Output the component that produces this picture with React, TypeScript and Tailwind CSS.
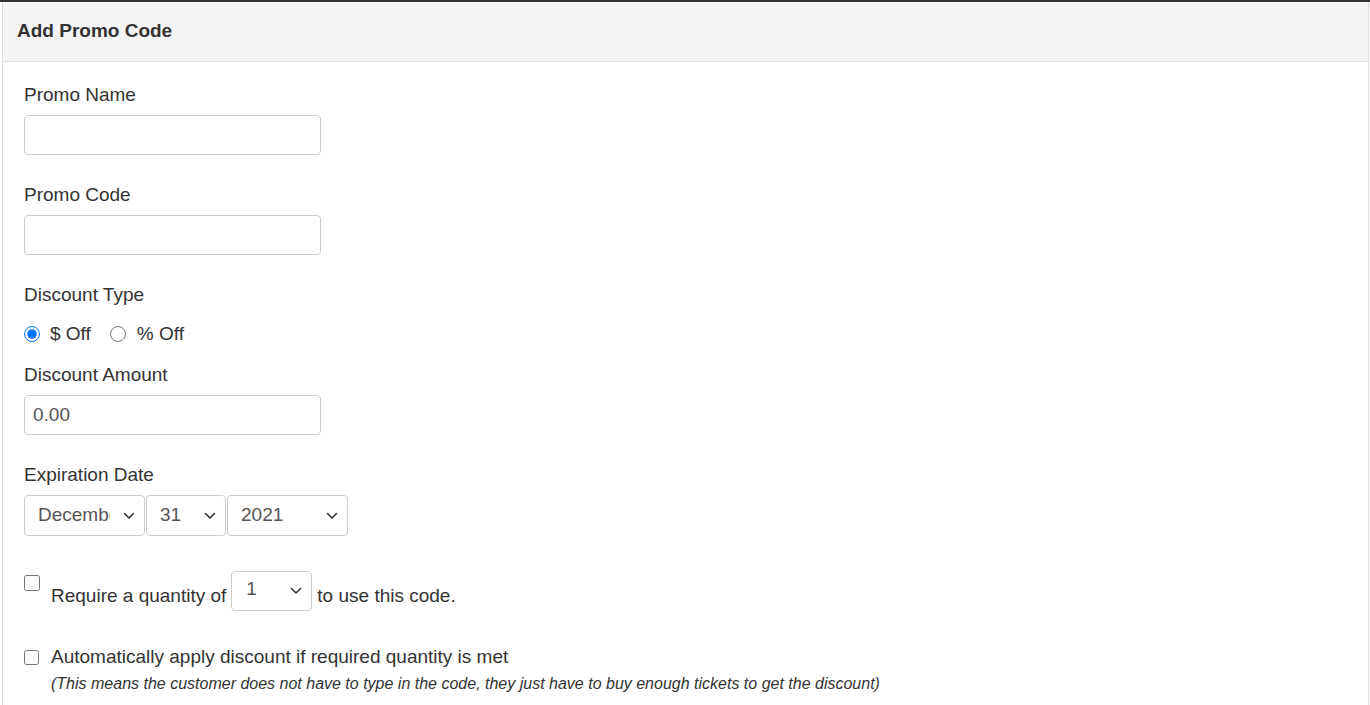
import React from 'react';

function Chevron() {
  return (
    <svg
      className="pointer-events-none absolute right-[10px] top-1/2 -translate-y-1/2"
      width="12"
      height="8"
      viewBox="0 0 12 8"
      fill="none"
    >
      <path d="M1.5 1.5 6 6l4.5-4.5" stroke="#333" strokeWidth="1.6" strokeLinecap="round" strokeLinejoin="round" />
    </svg>
  );
}

function Select({ value, options, width }: { value: string; options: string[]; width: string }) {
  return (
    <div className={`relative ${width}`}>
      <select
        defaultValue={value}
        className="h-[41px] w-full appearance-none rounded-[4px] border border-[#ccc] bg-white pl-[13px] pr-[34px] text-[19px] text-[#555] outline-none"
      >
        {options.map((o) => (
          <option key={o}>{o}</option>
        ))}
      </select>
      <Chevron />
    </div>
  );
}

const months = ['January', 'February', 'March', 'April', 'May', 'June', 'July', 'August', 'September', 'October', 'November', 'December'];
const days = Array.from({ length: 31 }, (_, i) => String(i + 1));
const years = ['2021', '2022', '2023', '2024'];

export default function App() {
  return (
    <div className="min-h-screen bg-white font-['Liberation_Sans',Arial,sans-serif] text-[#333]">
      <div className="border-t-[2px] border-[#333]">
        <div className="ml-[2px] mr-[1px] min-h-[703px] border-l border-r border-[#ddd]">
          {/* Panel heading */}
          <div className="flex h-[60px] items-center border-b border-[#ddd] bg-[#f5f5f5] px-[14px]">
            <h3 className="text-[19px] font-bold text-[#333]">Add Promo Code</h3>
          </div>

          {/* Panel body */}
          <div className="px-[21px] pt-[20px]">
            <label className="block text-[19px] leading-[26px]">Promo Name</label>
            <input className="mt-[7px] block h-[40px] w-[297px] rounded-[4px] border border-[#ccc] px-[8px] text-[19px] outline-none" />

            <label className="mt-[27px] block text-[19px] leading-[26px]">Promo Code</label>
            <input className="mt-[7px] block h-[40px] w-[297px] rounded-[4px] border border-[#ccc] px-[8px] text-[19px] outline-none" />

            <label className="mt-[27px] block text-[19px] leading-[26px]">Discount Type</label>
            <div className="mt-[13px] flex h-[26px] items-center text-[19px]">
              <input type="radio" name="dtype" defaultChecked className="m-0 h-[16px] w-[16px] accent-[#0075ff]" />
              <span className="ml-[10px]">$ Off</span>
              <input type="radio" name="dtype" className="m-0 ml-[19px] h-[16px] w-[16px]" />
              <span className="ml-[11px]">% Off</span>
            </div>

            <label className="mt-[15px] block text-[19px] leading-[26px]">Discount Amount</label>
            <input
              defaultValue="0.00"
              className="mt-[7px] block h-[40px] w-[297px] rounded-[4px] border border-[#ccc] px-[8px] text-[19px] text-[#555] outline-none"
            />

            <label className="mt-[27px] block text-[19px] leading-[26px]">Expiration Date</label>
            <div className="mt-[7px] flex gap-[1px]">
              <Select value="December" options={months} width="w-[121px]" />
              <Select value="31" options={days} width="w-[80px]" />
              <Select value="2021" options={years} width="w-[121px]" />
            </div>

            <div className="mt-[35px] flex items-start">
              <input type="checkbox" className="m-0 mt-[4px] h-[16px] w-[16px]" />
              <div className="ml-[11px] flex items-end text-[19px]">
                <span className="pb-[1px]">Require a quantity of</span>
                <div className="relative ml-[5px] w-[81px]">
                  <select
                    defaultValue="1"
                    className="h-[40px] w-full appearance-none rounded-[4px] border border-[#ccc] bg-white pb-[4px] pl-[14px] pr-[30px] text-[19px] text-[#555] outline-none"
                  >
                    {['1', '2', '3', '4', '5', '6', '7', '8', '9', '10'].map((o) => (
                      <option key={o}>{o}</option>
                    ))}
                  </select>
                  <Chevron />
                </div>
                <span className="ml-[5px] pb-[1px]">to use this code.</span>
              </div>
            </div>

            <div className="mt-[33px] flex items-center">
              <input type="checkbox" className="m-0 h-[15px] w-[15px]" />
              <span className="ml-[12px] text-[19px] leading-[26px]">Automatically apply discount if required quantity is met</span>
            </div>
            <p className="ml-[27px] mt-[4px] text-[16px] italic leading-[20px] text-[#333]">
              (This means the customer does not have to type in the code, they just have to buy enough tickets to get the discount)
            </p>
          </div>
        </div>
      </div>
    </div>
  );
}
